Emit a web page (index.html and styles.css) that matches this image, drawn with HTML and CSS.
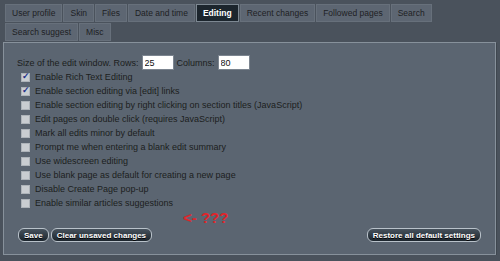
FILE: index.html
```html
<!DOCTYPE html>
<html lang="en">
<head>
    <meta charset="UTF-8">
    <title>Preferences - Editing</title>
    <link rel="stylesheet" href="styles.css">
</head>
<body>
    <ul class="tabs">
        <li class="tab">User profile</li>
        <li class="tab">Skin</li>
        <li class="tab">Files</li>
        <li class="tab">Date and time</li>
        <li class="tab active">Editing</li>
        <li class="tab">Recent changes</li>
        <li class="tab">Followed pages</li>
        <li class="tab">Search</li>
        <li class="tab">Search suggest</li>
        <li class="tab">Misc</li>
    </ul>

    <form class="panel">
        <div class="size-row">
            <label for="rows">Size of the edit window. Rows:</label>
            <input type="text" id="rows" class="num" value="25">
            <label for="cols">Columns:</label>
            <input type="text" id="cols" class="num" value="80">
        </div>

        <ul class="options">
            <li><label><input type="checkbox" checked> Enable Rich Text Editing</label></li>
            <li><label><input type="checkbox" checked> Enable section editing via [edit] links</label></li>
            <li><label><input type="checkbox"> Enable section editing by right clicking on section titles (JavaScript)</label></li>
            <li><label><input type="checkbox"> Edit pages on double click (requires JavaScript)</label></li>
            <li><label><input type="checkbox"> Mark all edits minor by default</label></li>
            <li><label><input type="checkbox"> Prompt me when entering a blank edit summary</label></li>
            <li><label><input type="checkbox"> Use widescreen editing</label></li>
            <li><label><input type="checkbox"> Use blank page as default for creating a new page</label></li>
            <li><label><input type="checkbox"> Disable Create Page pop-up</label></li>
            <li><label><input type="checkbox"> Enable similar articles suggestions</label></li>
        </ul>

        <div class="note">&lt;- ???</div>

        <div class="buttons">
            <div class="left">
                <button type="submit" class="btn">Save</button>
                <button type="reset" class="btn">Clear unsaved changes</button>
            </div>
            <button type="button" class="btn">Restore all default settings</button>
        </div>
    </form>
</body>
</html>
```

FILE: styles.css
```css
body {
    margin: 0;
    background-color: #4a525c;
    font-family: "Liberation Sans", Arial, sans-serif;
    font-size: 9px;
    color: #1c1e20;
}
.tabs {
    display: flex;
    flex-wrap: wrap;
    gap: 1px;
    width: 440px;
    margin: 0;
    padding: 4px 0 0 5px;
    list-style: none;
}
.tab {
    padding: 0 6px;
    line-height: 16px;
    font-size: 8.5px;
    background: #5d6672;
    border: 1px solid #67707b;
    color: #1e2124;
}
.tab.active {
    background: #1c252d;
    border-color: #7d8892;
    color: #fff;
    font-weight: bold;
}
.panel {
    margin: 1px 4px 0 3px;
    padding: 12px 14px 12px 13px;
    background: #5b6571;
    border: 1px solid #87919b;
    box-shadow: 1px 1px 0 #3f474f;
}
.size-row {
    display: flex;
    align-items: center;
    height: 15px;
}
.size-row .num {
    width: 32px;
    height: 15px;
    box-sizing: border-box;
    margin: 0 3px;
    padding: 0 2px;
    border: 1px solid #7c8590;
    background: #fff;
    font-family: inherit;
    font-size: 9px;
    color: #111;
}
.options {
    list-style: none;
    margin: 0;
    padding: 0 0 0 4px;
}
.options li {
    line-height: 14px;
    height: 14px;
}
.options label {
    display: flex;
    align-items: center;
    gap: 4px;
}
.options input {
    appearance: none;
    width: 9px;
    height: 9px;
    margin: 0 1px 0 0;
    background: #c9cdd1;
    border: 1px solid #adb3b9;
    position: relative;
}
.options input:checked::after {
    content: "\2713";
    position: absolute;
    left: 0;
    top: -3px;
    font-size: 9px;
    font-weight: bold;
    color: #23318a;
}
.note {
    height: 18px;
    line-height: 16px;
    padding-left: 166px;
    color: #e0242a;
    font-size: 15px;
    font-weight: bold;
}
.buttons {
    display: flex;
    justify-content: space-between;
    align-items: center;
    padding: 0 0 0 1px;
}
.left {
    display: flex;
    gap: 2px;
}
.btn {
    height: 14px;
    padding: 0 5px;
    border: 1px solid #b9c2ca;
    border-radius: 6px;
    background: linear-gradient(#47525d, #1c252d);
    color: #fff;
    font-family: inherit;
    font-size: 8px;
    font-weight: bold;
    text-shadow: 0 1px 0 #000;
    cursor: pointer;
}
```
